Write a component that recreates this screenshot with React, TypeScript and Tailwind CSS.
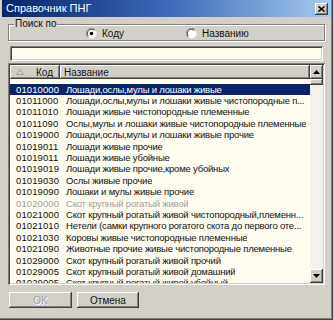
import React from 'react';

type Row = { code: string; name: string; muted?: boolean };

const rows: Row[] = [
  { code: '01010000', name: 'Лошади,ослы,мулы и лошаки живые' },
  { code: '01011000', name: 'Лошади,ослы,мулы и лошаки живые чистопородные п...' },
  { code: '01011010', name: 'Лошади живые чистопородные племенные' },
  { code: '01011090', name: 'Ослы,мулы и лошаки живые чистопородные племенные' },
  { code: '01019000', name: 'Лошади,ослы,мулы и лошаки живые прочие' },
  { code: '01019011', name: 'Лошади живые прочие' },
  { code: '01019011', name: 'Лошади живые убойные' },
  { code: '01019019', name: 'Лошади живые прочие,кроме убойных' },
  { code: '01019030', name: 'Ослы живые прочие' },
  { code: '01019090', name: 'Лошаки и мулы живые прочие' },
  { code: '01020000', name: 'Скот крупный рогатый живой', muted: true },
  { code: '01021000', name: 'Скот крупный рогатый живой чистопородный,племенн...' },
  { code: '01021010', name: 'Нетели (самки крупного рогатого скота до первого оте...' },
  { code: '01021030', name: 'Коровы живые чистопородные племенные' },
  { code: '01021090', name: 'Животные прочие живые чистопородные племенные' },
  { code: '01029000', name: 'Скот крупный рогатый живой прочий' },
  { code: '01029005', name: 'Скот крупный рогатый живой домашний' },
  { code: '01029005', name: 'Скот крупный рогатый живой убойный' },
];

const raised =
  'shadow-[inset_-1px_-1px_#404040,inset_1px_1px_#ffffff,inset_-2px_-2px_#808080,inset_2px_2px_#d4d0c8]';
const sunken =
  'shadow-[inset_1px_1px_#808080,inset_-1px_-1px_#ffffff,inset_2px_2px_#404040,inset_-2px_-2px_#d4d0c8]';

function Radio({ checked, label }: { checked?: boolean; label: string }) {
  return (
    <div className="flex items-center gap-[5px]">
      <svg width="11" height="11" viewBox="0 0 12 12">
        <circle cx="6" cy="6" r="5.5" fill="#ffffff" />
        <path d="M10 2 A5.5 5.5 0 0 0 2 10" stroke="#808080" strokeWidth="1" fill="none" />
        <path d="M9.2 2.8 A4.5 4.5 0 0 0 2.8 9.2" stroke="#404040" strokeWidth="1" fill="none" />
        {checked ? <circle cx="6" cy="6" r="2" fill="#000000" /> : null}
      </svg>
      <span>{label}</span>
    </div>
  );
}

function ScrollArrow({ up }: { up?: boolean }) {
  return (
    <div className={`flex h-[14px] w-[13px] items-center justify-center bg-[#d4d0c8] ${raised}`}>
      <svg width="7" height="4" viewBox="0 0 7 4">
        {up ? <path d="M3.5 0 L7 4 L0 4 Z" fill="#000" /> : <path d="M0 0 L7 0 L3.5 4 Z" fill="#000" />}
      </svg>
    </div>
  );
}

export default function App() {
  return (
    <div className="flex h-[320px] w-[333px] flex-col bg-[#d4d0c8] px-[2px] font-['Liberation_Sans',Arial,sans-serif] text-[10px] text-[#111111] shadow-[inset_-1px_-1px_#404040,inset_-2px_-2px_#808080]">
      <div className="flex h-[17px] shrink-0 items-center justify-between bg-gradient-to-r from-[#0a246a] via-[#3a6ab8] to-[#a6caf0] pl-[4px] pr-[3px]">
        <span className="text-[11px] text-white">Справочник ПНГ</span>
        <div className={`flex h-[12px] w-[13px] items-center justify-center bg-[#d4d0c8] ${raised}`}>
          <svg width="7" height="6" viewBox="0 0 7 6">
            <path d="M0.5 0.5 L6.5 5.5 M6.5 0.5 L0.5 5.5" stroke="#000" strokeWidth="1.6" />
          </svg>
        </div>
      </div>

      <div className="flex flex-1 flex-col px-[6px]">
        <div className="relative mt-[7px] flex h-[17px] items-center border border-[#808080] shadow-[1px_1px_#ffffff,inset_1px_1px_#ffffff]">
          <span className="absolute -top-[7px] left-[5px] bg-[#d4d0c8] px-[1px] leading-[12px]">Поиск по</span>
          <div className="ml-[77px] mt-[2px] flex">
            <Radio checked label="Коду" />
            <div className="ml-[62px]">
              <Radio label="Названию" />
            </div>
          </div>
        </div>

        <div className={`mx-[2px] mt-[5px] h-[15px] bg-[#fffcf0] ${sunken}`} />

        <div className={`mt-[2px] flex h-[222px] bg-[#fffcf0] p-[2px] ${sunken}`}>
          <div className="flex min-w-0 flex-1 flex-col overflow-hidden">
            <div className="flex h-[14px] shrink-0 bg-[#d4d0c8]">
              <div className={`flex w-[50px] items-center ${raised}`}>
                <svg className="ml-[6px]" width="8" height="6" viewBox="0 0 8 6">
                  <path d="M4 0.5 L7.5 5.5 L0.5 5.5 Z" fill="none" stroke="#a0a0a0" strokeWidth="1" />
                </svg>
                <span className="ml-[12px]">Код</span>
              </div>
              <div className={`flex flex-1 items-center pl-[4px] ${raised}`}>Название</div>
            </div>
            <div className="mt-[4.5px] flex flex-col text-[9.5px]">
              {rows.map((row, i) => (
                <div
                  key={i}
                  className={`flex h-[11.4px] shrink-0 items-center whitespace-nowrap leading-[11px] ${
                    i === 0 ? 'bg-[#0a246a] text-white' : row.muted ? 'text-[#a0a0a0]' : ''
                  }`}
                >
                  <span className="w-[50px] shrink-0 pl-[6px] tracking-[0.1px]">{row.code}</span>
                  <span className="overflow-hidden pl-[6px] tracking-[-0.2px]">{row.name}</span>
                </div>
              ))}
            </div>
          </div>
          <div className="flex w-[13px] shrink-0 flex-col bg-[#f4f2ea]">
            <ScrollArrow up />
            <div className={`h-[6px] w-[13px] bg-[#d4d0c8] ${raised}`} />
            <div className="flex-1" />
            <ScrollArrow />
          </div>
        </div>

        <div className="mt-[7px] flex gap-[5px] pl-[1px]">
          <div className={`flex h-[16px] w-[63px] items-center justify-center text-[#a0a0a0] [text-shadow:1px_1px_#ffffff] ${raised}`}>
            OK
          </div>
          <div className={`flex h-[16px] w-[62px] items-center justify-center ${raised}`}>Отмена</div>
        </div>
      </div>
    </div>
  );
}
